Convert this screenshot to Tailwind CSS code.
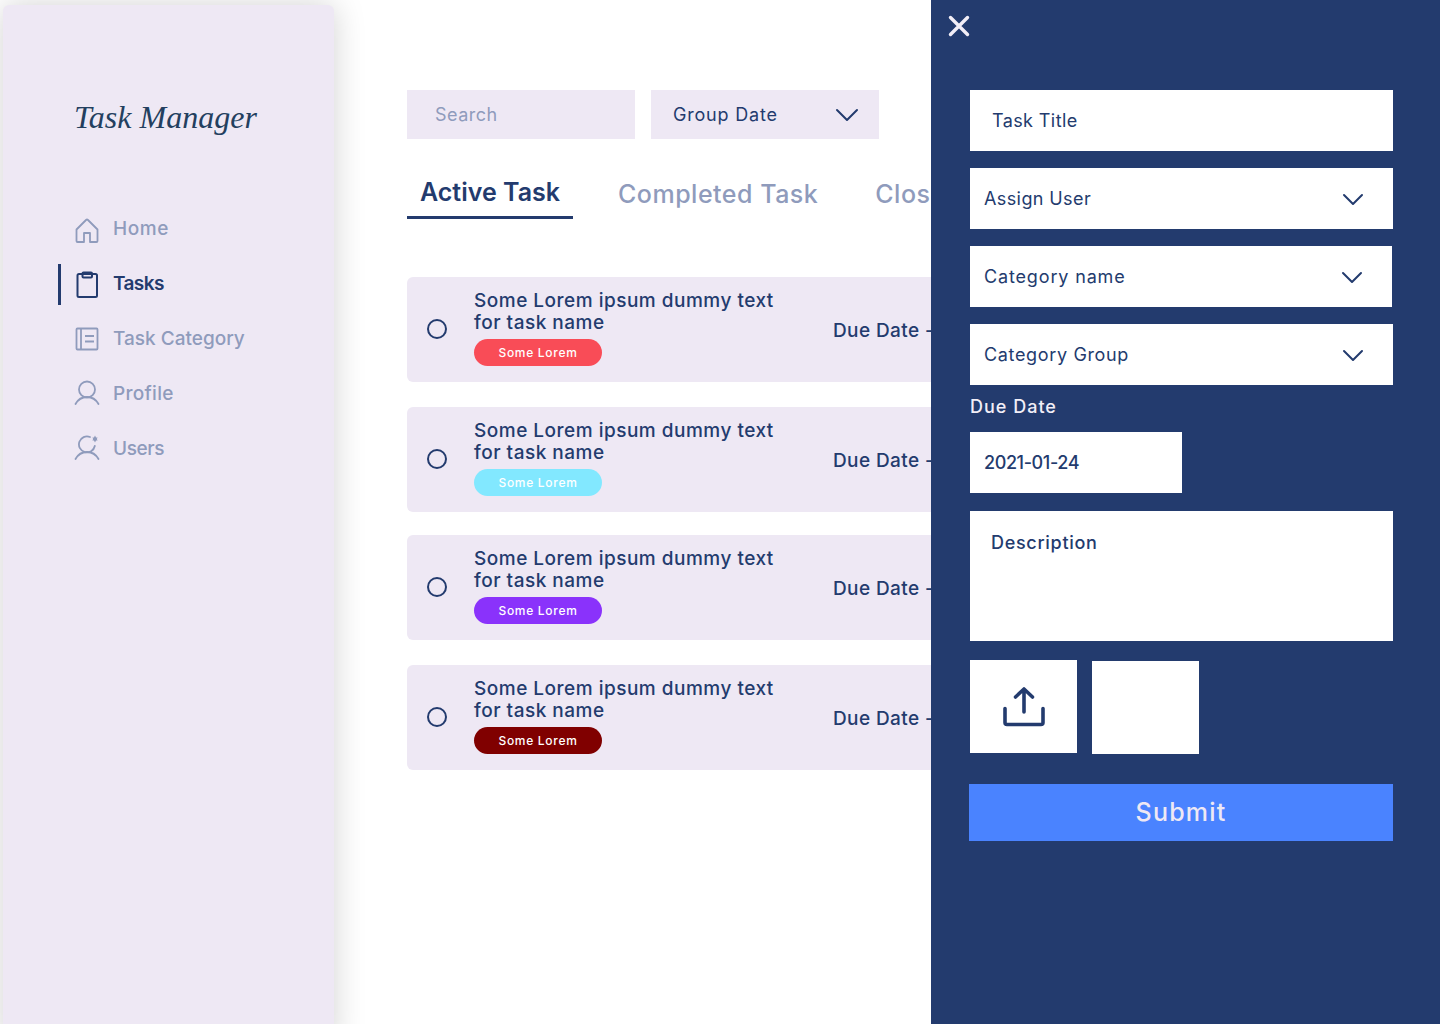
<!DOCTYPE html>
<html lang="en">
<head>
    <meta charset="UTF-8">
    <meta name="viewport" content="width=device-width, initial-scale=1.0">
    <title>Task Manager</title>
    <script src="https://cdn.jsdelivr.net/npm/@tailwindcss/browser@4"></script>
</head>
<body class="bg-white">
    <div class="flex h-[1024px] w-[1440px] overflow-hidden font-['Inter',sans-serif] text-[#233b6e]">
        <!-- Sidebar -->
        <div class="w-[334px] shrink-0 pl-[3px] pt-[5px]">
            <aside class="h-[1040px] rounded-t-md bg-[#eee8f4] shadow-[0_0_32px_rgba(0,0,0,0.18)] pt-[87px]">
                <h1 class="ml-[71px] h-[50px] font-['Liberation_Serif',serif] text-[32px] italic leading-[50px] text-[#233f5f]">Task Manager</h1>
                <nav class="mt-[67px] text-[#8f9bbc]">
                    <a class="flex h-[40px] items-center pl-[71px]">
                        <svg class="h-[28px] w-[28px]" viewBox="0 0 28 28" fill="none" stroke="currentColor" stroke-width="1.8" stroke-linejoin="round"><path d="M2.500 14.500 12 5a1.500 1.500 0 0 1 2 0l9.500 9.500V26a1 1 0 0 1-1 1H16v-9h-6v9H3.500a1 1 0 0 1-1-1z"/></svg>
                        <span class="ml-[11px] text-[19px] font-medium tracking-[0.6px]">Home</span>
                    </a>
                    <a class="mt-[15px] ml-[55px] flex h-[41px] items-center border-l-[3px] border-[#233b6e] pl-[13px] text-[#233b6e]">
                        <svg class="h-[28px] w-[28px]" viewBox="0 0 28 28" fill="none" stroke="currentColor" stroke-width="2" stroke-linejoin="round"><rect x="3.500" y="3" width="19.500" height="23" rx="1.500"/><rect x="8.500" y="1.500" width="9.500" height="5" rx="1"/></svg>
                        <span class="ml-[11px] text-[19px] font-semibold tracking-[-0.6px]">Tasks</span>
                    </a>
                    <a class="mt-[14px] flex h-[40px] items-center pl-[71px]">
                        <svg class="h-[28px] w-[28px]" viewBox="0 0 28 28" fill="none" stroke="currentColor" stroke-width="1.800"><rect x="2.500" y="3.500" width="21" height="21" rx="1"/><path d="M7 3.500v21M11 11h9M11 16.500h9"/></svg>
                        <span class="ml-[11px] text-[19px] font-medium">Task Category</span>
                    </a>
                    <a class="mt-[15px] flex h-[40px] items-center pl-[71px]">
                        <svg class="h-[28px] w-[28px]" viewBox="0 0 28 28" fill="none" stroke="currentColor" stroke-width="1.800" stroke-linecap="round"><circle cx="13" cy="9.500" r="8"/><path d="M1.500 24c2.500-4.500 6-7 11.500-7s9 2.500 11.500 7"/></svg>
                        <span class="ml-[11px] text-[19px] font-medium tracking-[0.3px]">Profile</span>
                    </a>
                    <a class="mt-[15px] flex h-[40px] items-center pl-[71px]">
                        <svg class="h-[28px] w-[28px]" viewBox="0 0 28 28" fill="none" stroke="currentColor" stroke-width="1.800" stroke-linecap="round"><path d="M16 2A8 8 0 1 0 20.800 11"/><path d="M1.500 24c2.500-4.500 6-7 11.500-7s9 2.500 11.500 7"/><path d="M21 0.500 23.600 5.500H18.400zM21 7.500 18.400 2.500H23.600z" fill="currentColor" stroke="none"/></svg>
                        <span class="ml-[11px] text-[19px] font-medium tracking-[-0.4px]">Users</span>
                    </a>
                </nav>
            </aside>
        </div>

        <!-- Main -->
        <main class="min-w-0 flex-1 overflow-hidden pl-[73px] pt-[90px]">
            <div class="flex gap-[16px]">
                <div class="flex h-[49px] w-[228px] items-center bg-[#eee8f4] pl-[28px] text-[18px] tracking-[0.5px] text-[#8f9bbc]">Search</div>
                <div class="flex h-[49px] w-[228px] items-center justify-between bg-[#eee8f4] pl-[22px] pr-[20px] text-[18px] tracking-[0.8px]">
                    <span>Group Date</span>
                    <svg class="h-[14px] w-[24px]" viewBox="0 0 24 14" fill="none" stroke="currentColor" stroke-width="2" stroke-linecap="round" stroke-linejoin="round"><path d="m2 2 10 10L22 2"/></svg>
                </div>
            </div>
            <div class="mt-[33px] flex h-[47px] whitespace-nowrap">
                <div class="h-[47px] w-[166px] shrink-0 border-b-[3px] border-[#233b6e] pl-[13px] text-[25px] font-semibold leading-[40px]">Active Task</div>
                <div class="ml-[45px] shrink-0 pt-[2px] text-[25px] font-medium leading-[40px] tracking-[0.5px] text-[#8f9bbc]">Completed Task</div>
                <div class="ml-[57px] shrink-0 pt-[2px] text-[25px] font-medium leading-[40px] tracking-[0.5px] text-[#8f9bbc]">Closed</div>
            </div>

            <!-- Task list -->
            <div class="mt-[58px] w-[540px]">
                <div class="flex h-[105px] items-center rounded-md bg-[#eee8f4] pl-[20px]">
                    <span class="mt-[-1px] h-[20px] w-[20px] shrink-0 rounded-full border-2 border-[#233b6e]"></span>
                    <div class="ml-[27px] h-full w-[359px] pt-[13px]">
                        <p class="text-[19px] font-medium leading-[22px] tracking-[0.5px]">Some Lorem ipsum dummy text<br>for task name</p>
                        <span class="mt-[5px] flex h-[27px] w-[128px] items-center justify-center rounded-full bg-[#f94c57] text-[12px] font-medium tracking-[0.7px] text-white">Some Lorem</span>
                    </div>
                    <span class="mt-[3px] whitespace-nowrap text-[19px] font-medium tracking-[0.4px]">Due Date -</span>
                </div>
                <div class="mt-[25px] flex h-[105px] items-center rounded-md bg-[#eee8f4] pl-[20px]">
                    <span class="mt-[-1px] h-[20px] w-[20px] shrink-0 rounded-full border-2 border-[#233b6e]"></span>
                    <div class="ml-[27px] h-full w-[359px] pt-[13px]">
                        <p class="text-[19px] font-medium leading-[22px] tracking-[0.5px]">Some Lorem ipsum dummy text<br>for task name</p>
                        <span class="mt-[5px] flex h-[27px] w-[128px] items-center justify-center rounded-full bg-[#82e8ff] text-[12px] font-medium tracking-[0.7px] text-white">Some Lorem</span>
                    </div>
                    <span class="mt-[3px] whitespace-nowrap text-[19px] font-medium tracking-[0.4px]">Due Date -</span>
                </div>
                <div class="mt-[23px] flex h-[105px] items-center rounded-md bg-[#eee8f4] pl-[20px]">
                    <span class="mt-[-1px] h-[20px] w-[20px] shrink-0 rounded-full border-2 border-[#233b6e]"></span>
                    <div class="ml-[27px] h-full w-[359px] pt-[13px]">
                        <p class="text-[19px] font-medium leading-[22px] tracking-[0.5px]">Some Lorem ipsum dummy text<br>for task name</p>
                        <span class="mt-[5px] flex h-[27px] w-[128px] items-center justify-center rounded-full bg-[#8a32fb] text-[12px] font-medium tracking-[0.7px] text-white">Some Lorem</span>
                    </div>
                    <span class="mt-[3px] whitespace-nowrap text-[19px] font-medium tracking-[0.4px]">Due Date -</span>
                </div>
                <div class="mt-[25px] flex h-[105px] items-center rounded-md bg-[#eee8f4] pl-[20px]">
                    <span class="mt-[-1px] h-[20px] w-[20px] shrink-0 rounded-full border-2 border-[#233b6e]"></span>
                    <div class="ml-[27px] h-full w-[359px] pt-[13px]">
                        <p class="text-[19px] font-medium leading-[22px] tracking-[0.5px]">Some Lorem ipsum dummy text<br>for task name</p>
                        <span class="mt-[5px] flex h-[27px] w-[128px] items-center justify-center rounded-full bg-[#800000] text-[12px] font-medium tracking-[0.7px] text-white">Some Lorem</span>
                    </div>
                    <span class="mt-[3px] whitespace-nowrap text-[19px] font-medium tracking-[0.4px]">Due Date -</span>
                </div>
            </div>
        </main>

        <!-- Add task panel -->
        <section class="relative w-[509px] shrink-0 bg-[#233b6e] pl-[39px] pt-[90px]">
            <svg class="absolute left-[17px] top-[15px] h-[22px] w-[22px]" viewBox="0 0 22 22" fill="none" stroke="#f2eef7" stroke-width="3.400" stroke-linecap="round"><path d="m2.500 2.500 17 17M19.500 2.500l-17 17"/></svg>
            <div class="flex h-[61px] w-[423px] items-center bg-white pl-[22px] text-[18px] tracking-[0.4px]">Task Title</div>
            <div class="mt-[17px] flex h-[61px] w-[423px] items-center justify-between bg-white pl-[14px] pr-[28px] text-[18px] tracking-[0.4px]">
                <span>Assign User</span>
                <svg class="h-[14px] w-[24px]" viewBox="0 0 24 14" fill="none" stroke="currentColor" stroke-width="2" stroke-linecap="round" stroke-linejoin="round"><path d="m3 3 9 9 9-9"/></svg>
            </div>
            <div class="mt-[17px] flex h-[61px] w-[422px] items-center justify-between bg-white pl-[14px] pr-[28px] text-[18px] tracking-[0.85px]">
                <span>Category name</span>
                <svg class="h-[14px] w-[24px]" viewBox="0 0 24 14" fill="none" stroke="currentColor" stroke-width="2" stroke-linecap="round" stroke-linejoin="round"><path d="m3 3 9 9 9-9"/></svg>
            </div>
            <div class="mt-[17px] flex h-[61px] w-[423px] items-center justify-between bg-white pl-[14px] pr-[28px] text-[18px] tracking-[0.65px]">
                <span>Category Group</span>
                <svg class="h-[14px] w-[24px]" viewBox="0 0 24 14" fill="none" stroke="currentColor" stroke-width="2" stroke-linecap="round" stroke-linejoin="round"><path d="m3 3 9 9 9-9"/></svg>
            </div>
            <label class="mt-[9px] block h-[38px] text-[18px] font-medium leading-[26px] tracking-[1px] text-[#f2eef7]">Due Date</label>
            <div class="flex h-[61px] w-[212px] items-center bg-white pl-[14px] text-[18px] font-medium tracking-[-0.4px]">2021-01-24</div>
            <div class="mt-[18px] h-[130px] w-[423px] bg-white pl-[21px] pt-[19px] text-[18px] font-medium leading-[26px] tracking-[0.7px]">Description</div>
            <div class="mt-[19px] flex items-start gap-[15px]">
                <div class="flex h-[93px] w-[107px] items-center justify-center bg-white">
                    <svg class="h-[42px] w-[44px]" viewBox="0 0 44 42" fill="none" stroke="#233b6e" stroke-width="3.600" stroke-linecap="round" stroke-linejoin="round"><path d="M22 26V4M13.500 11 22 3l8.500 8"/><path d="M3 22.500V36.500a2 2 0 0 0 2 2h34a2 2 0 0 0 2-2V22.500"/></svg>
                </div>
                <div class="mt-[1px] h-[93px] w-[107px] bg-white"></div>
            </div>
            <button class="mt-[30px] ml-[-1px] flex h-[57px] w-[424px] items-center justify-center bg-[#4a83ff] text-[25px] font-medium tracking-[1.2px] text-[#eee8f4]">Submit</button>
        </section>
    </div>
</body>
</html>
